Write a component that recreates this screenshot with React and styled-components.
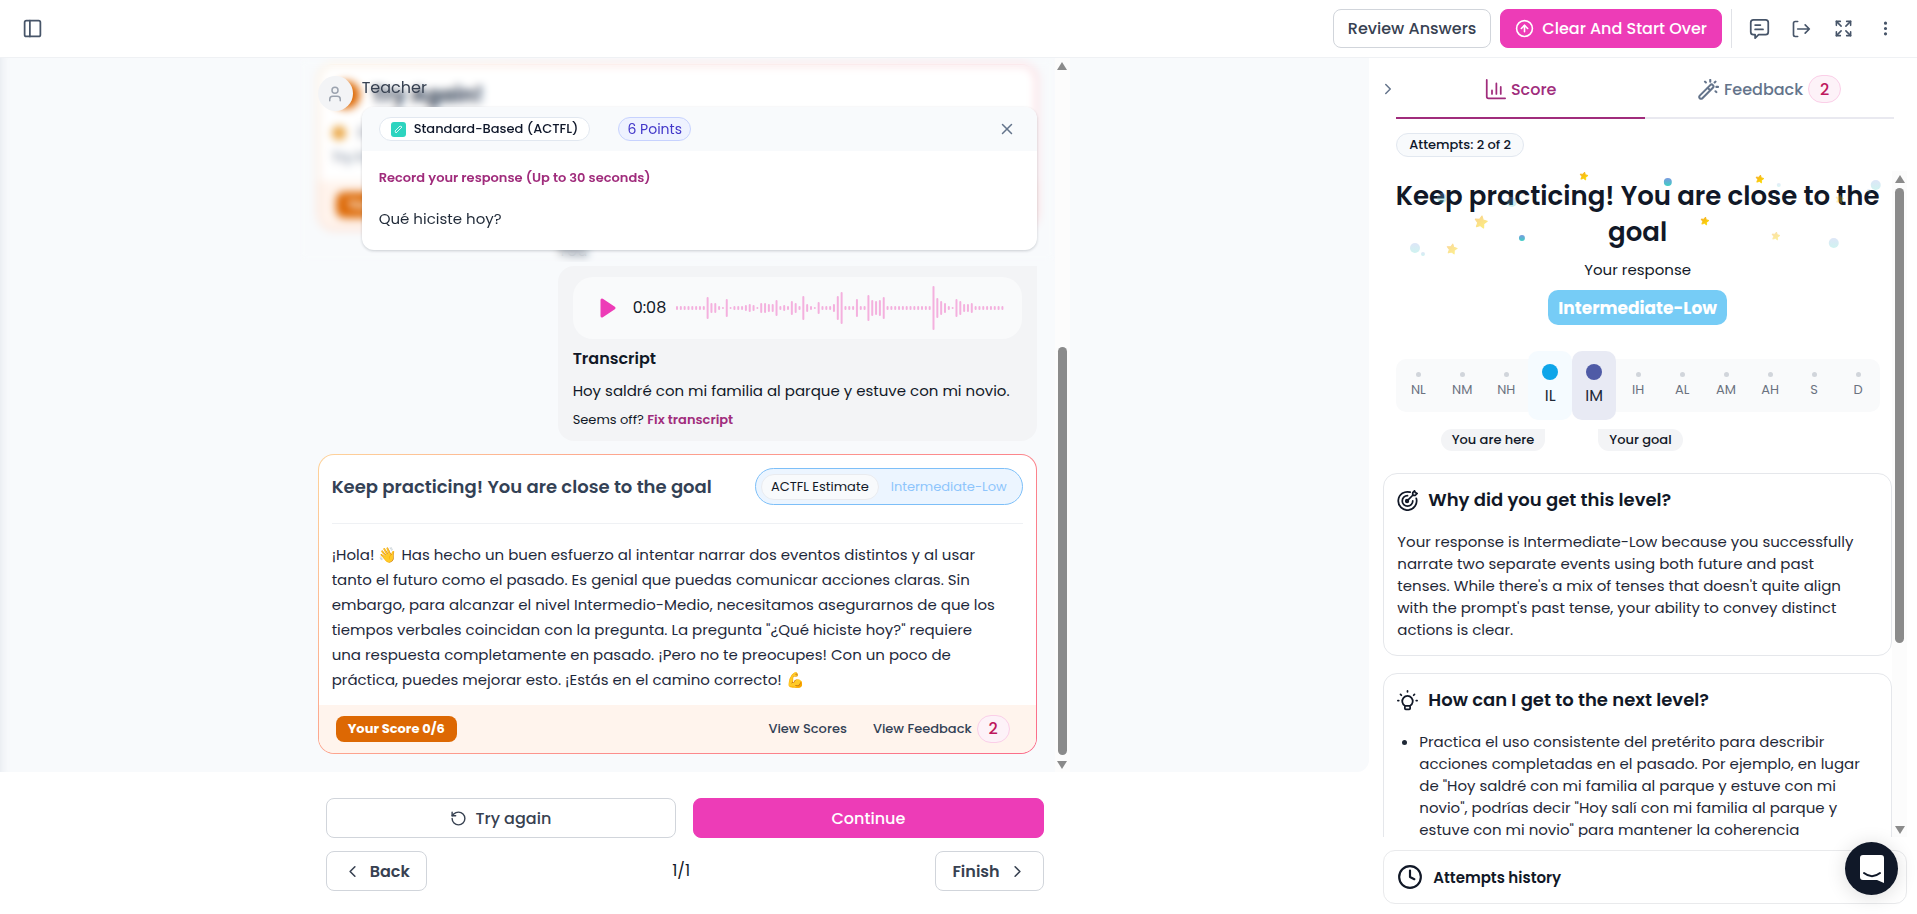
import React from 'react'
import styled, { createGlobalStyle, css } from 'styled-components'
import {
    ChevronLeft,
    ChevronRight,
    CircleArrowUp,
    Clock,
    Expand,
    PanelLeft,
    RotateCcw,
    User,
    X,
} from 'lucide-react'
import { BsThreeDotsVertical } from 'react-icons/bs'

const GlobalStyle = createGlobalStyle`
    * {
        box-sizing: border-box;
    }
    body {
        margin: 0;
        background: white;
        color: #111827;
        font-family: 'Poppins', 'Inter', sans-serif;
        font-size: 16px;
        line-height: 24px;
    }
    h1, h2, h3, p, ul {
        margin: 0;
        padding: 0;
    }
    button {
        font-family: inherit;
        cursor: pointer;
    }
    svg {
        flex-shrink: 0;
    }
`

const Page = styled.div`
    display: flex;
    flex-direction: column;
    height: 100vh;
    overflow: hidden;
`

const Header = styled.header`
    display: flex;
    align-items: center;
    justify-content: space-between;
    padding: 9px 20px;
    border-bottom: 1px solid #eff1f4;
`

const HeaderActions = styled.div`
    display: flex;
    align-items: center;
    gap: 9px;
`

const HeaderIcons = styled.div`
    display: flex;
    align-items: center;
    gap: 18px;
    height: 39px;
    padding-left: 15px;
    border-left: 1px solid #e0e2e7;
`

const IconButton = styled.button`
    display: flex;
    align-items: center;
    justify-content: center;
    width: 24px;
    height: 24px;
    padding: 0;
    border: 0;
    background: none;
    color: ${props => props.$color || '#475569'};
`

const Button = styled.button`
    display: flex;
    align-items: center;
    justify-content: center;
    gap: 8px;
    height: ${props => props.$tall ? '40px' : '39px'};
    padding: 0 ${props => props.$tall ? '16px' : '14px'};
    border: 1px solid ${props => props.$primary ? '#ed3cb7' : '#d1d5db'};
    border-radius: 8px;
    background: ${props => props.$primary ? '#ed3cb7' : 'white'};
    color: ${props => props.$primary ? 'white' : '#374151'};
    font-size: 16px;
    font-weight: ${props => props.$bold ? 600 : 500};
    white-space: nowrap;
`

const Main = styled.main`
    flex: 1;
    min-height: 0;
    display: grid;
    grid-template-columns: minmax(0, 5fr) minmax(0, 2fr);
`

/* conversation */

const Conversation = styled.section`
    display: flex;
    flex-direction: column;
    min-height: 0;
`

const FeedArea = styled.div`
    flex: 1;
    min-height: 0;
    display: flex;
    justify-content: center;
    background: #f8fafc;
    border-bottom-right-radius: 12px;
    box-shadow: inset 10px 0 10px -9px rgba(100, 116, 139, 0.14);
`

const FeedScroller = styled.div`
    position: relative;
    display: flex;
    width: 100%;
    max-width: 770px;
`

const Feed = styled.div`
    flex: 1;
    min-width: 0;
    display: flex;
    flex-direction: column;
    justify-content: flex-end;
    padding: 0 18px 18px;
    overflow: hidden;
`

const Track = styled.div`
    display: flex;
    flex-direction: column;
    align-items: center;
    width: 15px;
    padding: 4px 0 3px;
    background: #fcfcfc;
`

const Arrow = styled.span`
    width: 0;
    height: 0;
    margin-top: ${props => props.$down ? '6px' : '0'};
    border: 5px solid transparent;
    border-top-width: ${props => props.$down ? '8px' : '0'};
    border-bottom-width: ${props => props.$down ? '0' : '8px'};
    border-top-color: #8b8b8b;
    border-bottom-color: #8b8b8b;
`

const Rail = styled.div`
    flex: 1;
    display: flex;
    flex-direction: column;
    justify-content: ${props => props.$end ? 'flex-end' : 'flex-start'};
    margin-top: 5px;
`

const Thumb = styled.div`
    width: 9px;
    border-radius: 5px;
    background: #8b8b8b;
`

const ResultCard = styled.article`
    flex-shrink: 0;
    border: 1px solid transparent;
    border-radius: 16px;
    overflow: hidden;
    background:
        linear-gradient(white, white) padding-box,
        linear-gradient(135deg, #fed39a, #fda58e 30%, #fb6d8a) border-box;
`

const ResultBody = styled.div`
    padding: ${props => props.$compact ? '16px 13px 12px' : '13px'};
`

const ResultTop = styled.div`
    display: flex;
    align-items: center;
    justify-content: space-between;
    padding-bottom: 18px;
    border-bottom: 1px solid #eff1f4;
    margin-bottom: 18px;
`

const ResultTitle = styled.h2`
    font-size: 18px;
    font-weight: 600;
    color: #334155;
`

const ResultText = styled.p`
    padding-right: 23px;
    color: #1e293b;
    font-size: 15px;
    line-height: 25px;
`

const ResultFooter = styled.div`
    display: flex;
    align-items: center;
    gap: 26px;
    height: 48px;
    padding: 0 26px 0 17px;
    background: #fff4ed;
`

const ScoreTag = styled.span`
    margin-right: auto;
    padding: 1px 12px;
    border-radius: 8px;
    background: #dd6803;
    color: white;
    font-size: 13px;
    font-weight: 700;
`

const FooterLink = styled.a`
    display: flex;
    align-items: center;
    gap: 5px;
    color: #334155;
    font-size: 13px;
    font-weight: 500;
    text-decoration: none;
`

const Count = styled.span`
    display: flex;
    align-items: center;
    justify-content: center;
    width: 33px;
    height: 28px;
    border: 1px solid #fbcfe8;
    border-radius: 14px;
    background: #fdf2f8;
    color: #be185d;
    font-size: 16px;
    font-weight: 500;
`

const Estimate = styled.div`
    display: flex;
    align-items: center;
    gap: 12px;
    height: 37px;
    padding: 0 15px 0 5px;
    border: 1px solid #7dbff8;
    border-radius: 19px;
    background: #ecf5ff;
    color: #8ec5fc;
    font-size: 13px;
`

const EstimateLabel = styled.span`
    padding: 0 9px;
    border: 1px solid #e9ebef;
    border-radius: 13px;
    background: #f8fafc;
    color: #111827;
`

const TryTitle = styled.div`
    display: flex;
    align-items: center;
    gap: 12px;
    margin-bottom: 12px;
    font-size: 21px;
    font-weight: 700;
    color: #334155;
`

const Dot = styled.span`
    width: ${props => props.$size};
    height: ${props => props.$size};
    border-radius: 50%;
    background: ${props => props.$color};
`

const TryRow = styled.div`
    display: flex;
    align-items: center;
    gap: 12px;
    font-size: 14px;
    color: #64748b;
`

const You = styled.p`
    width: 479px;
    margin: 9px 0 3px auto;
    color: #334155;
`

const Bubble = styled.article`
    align-self: flex-end;
    flex-shrink: 0;
    width: 479px;
    margin-bottom: 13px;
    padding: 11px 15px 9px;
    border-radius: 16px 0 16px 16px;
    background: #f3f4f6;
    color: #111827;
`

const Player = styled.div`
    display: flex;
    align-items: center;
    height: 62px;
    margin-bottom: 8px;
    padding: 0 16px 0 23px;
    border-radius: 20px;
    background: #f9fafb;
`

const PlayTime = styled.span`
    width: 42px;
    margin-left: 13px;
`

const Wave = styled.svg`
    flex: 1;
    min-width: 0;
    height: 44px;
`

const Transcript = styled.h3`
    margin-bottom: 8px;
    font-size: 16px;
    font-weight: 600;
`

const TranscriptText = styled.p`
    font-size: 15px;
`

const SmallLine = styled.p`
    margin-top: 5px;
    font-size: 13px;
`

const AccentLink = styled.a`
    color: #a02c7c;
    font-weight: 600;
    text-decoration: none;
`

const StickyPrompt = styled.div`
    position: absolute;
    top: 0;
    left: 0;
    right: 15px;
    display: flex;
    gap: 9px;
    padding: 18px 18px 12px;
    backdrop-filter: blur(4px);
`

const Avatar = styled.div`
    display: flex;
    align-items: center;
    justify-content: center;
    width: 35px;
    height: 35px;
    border-radius: 50%;
    background: #f3f4f6;
    color: #9ca3af;
`

const PromptColumn = styled.div`
    flex: 1;
    min-width: 0;
`

const PromptAuthor = styled.p`
    padding-bottom: 7px;
    color: #374151;
`

const PromptCard = styled.article`
    border-radius: 12px;
    overflow: hidden;
    background: white;
    box-shadow: 0 1px 3px rgba(15, 23, 42, 0.2);
`

const PromptHead = styled.div`
    display: flex;
    align-items: center;
    gap: 28px;
    height: 44px;
    padding: 0 18px 0 17px;
    background: #f8fafc;
`

const Chip = styled.span`
    display: flex;
    align-items: center;
    gap: 8px;
    height: 24px;
    padding: 0 11px;
    border: 1px solid #e2e8f0;
    border-radius: 12px;
    background: white;
    color: #0f172a;
    font-size: 13px;
    font-weight: 500;
    white-space: nowrap;
    ${props => props.$indigo && css`
        padding: 0 8px;
        border-color: #c7d2fe;
        background: #eef2ff;
        color: #4338ca;
        font-size: 14px;
        font-weight: 400;
    `}
    ${props => props.$soft && css`
        padding: 0 12px;
        background: #f8fafc;
    `}
`

const PromptBody = styled.div`
    padding: 15px 17px 19px;
`

const PromptHint = styled.p`
    margin-bottom: 17px;
    color: #a02c7c;
    font-size: 13px;
    font-weight: 600;
`

const PromptText = styled.p`
    color: #1f2937;
    font-size: 15px;
`

const Push = styled.div`
    margin-left: auto;
    display: flex;
`

const Controls = styled.footer`
    display: flex;
    flex-direction: column;
    gap: 13px;
    width: 100%;
    max-width: 718px;
    margin: 0 auto;
    padding: 26px 0 23px;
`

const MainActions = styled.div`
    display: grid;
    grid-template-columns: 1fr 1fr;
    gap: 17px;
`

const Pager = styled.div`
    display: flex;
    align-items: center;
    justify-content: space-between;
`

/* score panel */

const Panel = styled.aside`
    display: flex;
    flex-direction: column;
    min-height: 0;
    padding: 0 10px 10px 14px;
`

const TabRow = styled.div`
    display: flex;
    align-items: center;
    padding-right: 13px;
`

const Collapse = styled.button`
    display: flex;
    justify-content: center;
    width: 13px;
    padding: 0 4px 0 0;
    border: 0;
    background: none;
    color: #64748b;
`

const Tab = styled.button`
    flex: 1;
    display: flex;
    align-items: center;
    justify-content: center;
    gap: 5px;
    height: 61px;
    padding: 3px 0 0;
    border: 0;
    border-bottom: 2px solid ${props => props.$active ? '#a02c7c' : '#e9e9f0'};
    background: none;
    color: ${props => props.$active ? '#a02c7c' : '#64748b'};
    font-size: 16px;
    font-weight: 500;
`

const ChipRow = styled.div`
    display: flex;
    padding: 14px 13px;
`

const PanelScroller = styled.div`
    flex: 1;
    min-height: 0;
    display: flex;
    margin-bottom: 13px;
`

const PanelContent = styled.div`
    flex: 1;
    min-width: 0;
    overflow: hidden;
`

const Hero = styled.div`
    position: relative;
    display: flex;
    flex-direction: column;
    align-items: center;
    padding-top: 7px;
`

const Confetti = styled.svg`
    position: absolute;
    top: 0;
    left: 0;
    width: 100%;
    height: 90px;
`

const HeroTitle = styled.h1`
    font-size: 26px;
    font-weight: 600;
    line-height: 36px;
    text-align: center;
`

const HeroText = styled.p`
    margin: 8px 0;
    font-size: 15px;
`

const LevelBadge = styled.strong`
    display: flex;
    align-items: center;
    height: 35px;
    padding: 0 10px;
    border-radius: 10px;
    background: #76ccf6;
    color: white;
    font-size: 17px;
    font-weight: 700;
`

const Levels = styled.div`
    display: grid;
    grid-template-columns: repeat(11, 1fr);
    height: 53px;
    margin: 34px 12px 17px 13px;
    border-radius: 10px;
    background: #f9fafb;
`

const Level = styled.div`
    display: flex;
    flex-direction: column;
    align-items: center;
    justify-content: center;
    gap: 1px;
    padding-top: 3px;
    color: #6b7280;
    font-size: 13px;
    ${props => props.$tint && css`
        gap: 4px;
        margin: -8px 0;
        padding: 0;
        border-radius: 10px;
        background: ${props.$tint};
        color: #1f2937;
        font-size: 16px;
    `}
`

const Markers = styled.div`
    display: grid;
    grid-template-columns: 162px 1fr;
    gap: 53px;
    margin-bottom: 22px;
`

const Marker = styled.span`
    justify-self: ${props => props.$right ? 'end' : 'start'};
    padding: 0 11px;
    border-radius: ${props => props.$right ? '11px 0 11px 11px' : '0 11px 11px 11px'};
    background: #f3f4f6;
    font-size: 13px;
    font-weight: 500;
    line-height: 22px;
`

const Box = styled.section`
    margin-bottom: 17px;
    padding: 14px 26px 14px 13px;
    border: 1px solid #e5e7eb;
    border-radius: 14px;
    color: #1f2937;
    font-size: 15px;
    line-height: 22px;
`

const BoxTitle = styled.h2`
    display: flex;
    align-items: center;
    gap: 10px;
    margin-bottom: 19px;
    color: #111827;
    font-size: 18px;
    font-weight: 600;
    line-height: 24px;
`

const Tips = styled.ul`
    padding-left: 22px;
`

const History = styled.button`
    display: flex;
    align-items: center;
    gap: 10px;
    height: 54px;
    padding: 0 13px;
    border: 1px solid #e9eaec;
    border-radius: 12px;
    background: white;
    color: #111827;
    font-size: 15px;
    font-weight: 600;
`

const ChatLauncher = styled.button`
    position: fixed;
    right: 19px;
    bottom: 19px;
    display: flex;
    align-items: center;
    justify-content: center;
    width: 53px;
    height: 53px;
    padding: 0;
    border: 0;
    border-radius: 50%;
    background: #101828;
    box-shadow: 0 2px 20px rgba(0, 0, 0, 0.14);
`

const bars = [
    4, 4, 4, 4, 4, 4, 4, 4, 22, 10, 10, 4, 2, 18, 2, 4, 4, 4, 6, 8, 6, 2, 10, 10, 8, 8, 16, 4, 6, 4,
    14, 10, 4, 24, 8, 4, 2, 12, 4, 4, 4, 8, 24, 32, 4, 4, 4, 18, 4, 4, 26, 16, 14, 16, 22, 4, 4, 4,
    4, 4, 4, 4, 4, 4, 4, 4, 4, 44, 20, 14, 10, 4, 2, 18, 14, 8, 8, 10, 4, 4, 4, 4, 4, 4, 4, 4,
]

const levels = [
    { name: 'NL' },
    { name: 'NM' },
    { name: 'NH' },
    { name: 'IL', dot: '#0ea5e9', tint: '#f5fbff' },
    { name: 'IM', dot: '#4f5ba6', tint: '#e8eaf4' },
    { name: 'IH' },
    { name: 'AL' },
    { name: 'AM' },
    { name: 'AH' },
    { name: 'S' },
    { name: 'D' },
]

// x, y, scale, opacity
const stars = [
    [201, 5, 4, 1], [377, 8, 4, 1], [322, 50, 4, 1], [98, 51, 6, 0.5],
    [69, 78, 5, 0.45], [393, 65, 4, 0.4], [457, 28, 4, 0.3],
]

// x, y, radius, opacity
const bubbles = [
    [285, 11, 4, 1], [139, 67, 3, 1], [32, 77, 5, 0.25], [40, 83, 2, 0.25], [451, 72, 5, 0.25],
    [493, 14, 5, 0.25], [59, 27, 5, 0.3], [129, 31, 5, 0.25], [396, 14, 2, 0.2], [486, 20, 2, 0.2],
]

function Waveform() {
    return (
        <Wave viewBox="0 0 332 44" preserveAspectRatio="none" aria-hidden="true">
            {bars.map((height, i) => (
                <rect
                    key={i}
                    x={1 + i * 3.84}
                    y={22 - height / 2}
                    width="2"
                    height={height}
                    rx="1"
                    fill="#f4b0de"
                />
            ))}
        </Wave>
    )
}

function HeroConfetti() {
    return (
        <Confetti viewBox="0 0 509 90" aria-hidden="true">
            <defs>
                <linearGradient id="bubble" x1="0" y1="0" x2="0" y2="1">
                    <stop offset="0" stopColor="#7b9ae0" />
                    <stop offset="1" stopColor="#3fcfc4" />
                </linearGradient>
                <linearGradient id="star" x1="0" y1="0" x2="1" y2="1">
                    <stop offset="0" stopColor="#f5a623" />
                    <stop offset="1" stopColor="#fce000" />
                </linearGradient>
            </defs>
            {stars.map(([x, y, size, opacity]) => (
                <path
                    key={`${x}-${y}`}
                    transform={`translate(${x} ${y}) rotate(10) scale(${size / 10})`}
                    d="M0 -10 L3 -4 L10 -3 L5 2 L6 9 L0 6 L-6 9 L-5 2 L-10 -3 L-3 -4 Z"
                    fill="url(#star)"
                    stroke="url(#star)"
                    strokeWidth="2"
                    strokeLinejoin="round"
                    opacity={opacity}
                />
            ))}
            {bubbles.map(([x, y, r, opacity]) => (
                <circle key={`${x}-${y}`} cx={x} cy={y} r={r} fill="url(#bubble)" opacity={opacity} />
            ))}
        </Confetti>
    )
}

function Line({ size = 20, width = 2, children }) {
    return (
        <svg
            width={size}
            height={size}
            viewBox="0 0 24 24"
            fill="none"
            stroke="currentColor"
            strokeWidth={width}
            strokeLinecap="round"
            strokeLinejoin="round"
            aria-hidden="true"
        >
            {children}
        </svg>
    )
}

function CommentIcon() {
    return (
        <Line size={21}>
            <path d="M5 2h14a3 3 0 0 1 3 3v11a3 3 0 0 1-3 3h-8l-4 4v-4H5a3 3 0 0 1-3-3V5a3 3 0 0 1 3-3ZM7 8h6M7 13h9" />
        </Line>
    )
}

function ExitIcon() {
    return (
        <Line size={20}>
            <path d="M8 3H5a2 2 0 0 0-2 2v14a2 2 0 0 0 2 2h3M8 12h14M17 7l5 5-5 5" />
        </Line>
    )
}

function ChartIcon() {
    return (
        <Line size={21}>
            <path d="M2 1v19a2 2 0 0 0 2 2h19M8 17v-4M13 17V5M18 17V9" />
        </Line>
    )
}

function WandIcon() {
    return (
        <Line size={21} width={2.4}>
            <path d="M2 19 14 7a2 2 0 0 1 3 3L5 22a2 2 0 0 1-3-3ZM11 10l3 3M14 1v2M8 3l1 1M20 3l-1 1M21 9h2M20 14l1 1" />
        </Line>
    )
}

function TargetIcon() {
    return (
        <Line size={21}>
            <path d="M15 2.500a10.500 10.500 0 1 0 7 7" />
            <path d="M12 6.500a6 6 0 1 0 6 6" />
            <path d="m11 13 7-7M18 6V3l2-2 1 2 2 1-2 2h-3Z" />
            <circle cx="11.500" cy="12.500" r="1.500" />
        </Line>
    )
}

function BulbIcon() {
    return (
        <Line size={21}>
            <path d="M9 18a6 6 0 1 1 6 0v3a1 1 0 0 1-1 1h-4a1 1 0 0 1-1-1ZM9 18h6M12 2V1M4 5l1 1M20 5l-1 1M1 12h1M22 12h1" />
        </Line>
    )
}

function Scrollbar({ end, size }) {
    return (
        <Track aria-hidden="true">
            <Arrow />
            <Rail $end={end}>
                <Thumb style={{ height: `${size}%` }} />
            </Rail>
            <Arrow $down />
        </Track>
    )
}

function TopBar() {
    return (
        <Header>
            <IconButton aria-label="Toggle sidebar">
                <PanelLeft size={21} />
            </IconButton>
            <HeaderActions>
                <Button>Review Answers</Button>
                <Button $primary>
                    <CircleArrowUp size={19} />
                    Clear And Start Over
                </Button>
                <HeaderIcons>
                    <IconButton aria-label="Comments"><CommentIcon /></IconButton>
                    <IconButton aria-label="Exit"><ExitIcon /></IconButton>
                    <IconButton aria-label="Full screen"><Expand size={19} /></IconButton>
                    <IconButton aria-label="More"><BsThreeDotsVertical size={17} /></IconButton>
                </HeaderIcons>
            </HeaderActions>
        </Header>
    )
}

function Prompt() {
    return (
        <StickyPrompt>
            <Avatar><User size={18} /></Avatar>
            <PromptColumn>
                <PromptAuthor>Teacher</PromptAuthor>
                <PromptCard>
                    <PromptHead>
                        <Chip>
                            <svg width="15" height="15" viewBox="0 0 15 15" aria-hidden="true">
                                <rect width="15" height="15" rx="3" fill="#2dd4bf" />
                                <path
                                    d="m4 9 5-5 2 1-6 6-1-2Z"
                                    fill="none"
                                    stroke="white"
                                    strokeWidth="0.800"
                                />
                            </svg>
                            Standard-Based (ACTFL)
                        </Chip>
                        <Chip $indigo>6 Points</Chip>
                        <Push>
                            <IconButton $color="#64748b" aria-label="Close"><X size={18} /></IconButton>
                        </Push>
                    </PromptHead>
                    <PromptBody>
                        <PromptHint>Record your response (Up to 30 seconds)</PromptHint>
                        <PromptText>Qué hiciste hoy?</PromptText>
                    </PromptBody>
                </PromptCard>
            </PromptColumn>
        </StickyPrompt>
    )
}

function Response() {
    return (
        <Bubble>
            <Player>
                <IconButton $color="#ed3cb7" aria-label="Play">
                    <svg width="16" height="20" viewBox="0 0 16 20">
                        <path d="M2 2v16l12-8Z" fill="currentColor" stroke="currentColor" strokeWidth="3" strokeLinejoin="round" />
                    </svg>
                </IconButton>
                <PlayTime>0:08</PlayTime>
                <Waveform />
            </Player>
            <Transcript>Transcript</Transcript>
            <TranscriptText>Hoy saldré con mi familia al parque y estuve con mi novio.</TranscriptText>
            <SmallLine>
                Seems off? <AccentLink href="#fix">Fix transcript</AccentLink>
            </SmallLine>
        </Bubble>
    )
}

function PreviousResult() {
    return (
        <ResultCard>
            <ResultBody $compact>
                <TryTitle>
                    <Dot $size="28px" $color="#dd6803" />
                    Try Again!
                </TryTitle>
                <TryRow>
                    <Dot $size="14px" $color="#e9a23b" />
                    0
                </TryRow>
                <TryRow>Try it</TryRow>
            </ResultBody>
            <ResultFooter>
                <ScoreTag>Your Score</ScoreTag>
            </ResultFooter>
        </ResultCard>
    )
}

function Result() {
    return (
        <ResultCard>
            <ResultBody>
                <ResultTop>
                    <ResultTitle>Keep practicing! You are close to the goal</ResultTitle>
                    <Estimate>
                        <EstimateLabel>ACTFL Estimate</EstimateLabel>
                        Intermediate-Low
                    </Estimate>
                </ResultTop>
                <ResultText>
                    ¡Hola! 👋 Has hecho un buen esfuerzo al intentar narrar dos eventos distintos y al usar
                    tanto el futuro como el pasado. Es genial que puedas comunicar acciones claras. Sin
                    embargo, para alcanzar el nivel Intermedio-Medio, necesitamos asegurarnos de que los
                    tiempos verbales coincidan con la pregunta. La pregunta "¿Qué hiciste hoy?" requiere
                    una respuesta completamente en pasado. ¡Pero no te preocupes! Con un poco de
                    práctica, puedes mejorar esto. ¡Estás en el camino correcto! 💪
                </ResultText>
            </ResultBody>
            <ResultFooter>
                <ScoreTag>Your Score 0/6</ScoreTag>
                <FooterLink href="#scores">View Scores</FooterLink>
                <FooterLink href="#feedback">
                    View Feedback
                    <Count>2</Count>
                </FooterLink>
            </ResultFooter>
        </ResultCard>
    )
}

function ScorePanel() {
    return (
        <Panel>
            <TabRow>
                <Collapse aria-label="Collapse panel"><ChevronRight size={18} /></Collapse>
                <Tab $active><ChartIcon />Score</Tab>
                <Tab><WandIcon />Feedback<Count>2</Count></Tab>
            </TabRow>
            <ChipRow>
                <Chip $soft>Attempts: 2 of 2</Chip>
            </ChipRow>
            <PanelScroller>
                <PanelContent>
                    <Hero>
                        <HeroTitle>Keep practicing! You are close to the goal</HeroTitle>
                        <HeroConfetti />
                        <HeroText>Your response</HeroText>
                        <LevelBadge>Intermediate-Low</LevelBadge>
                    </Hero>
                    <Levels>
                        {levels.map(level => (
                            <Level key={level.name} $tint={level.tint}>
                                <Dot $size={level.dot ? '16px' : '5px'} $color={level.dot || '#d1d5db'} />
                                {level.name}
                            </Level>
                        ))}
                    </Levels>
                    <Markers>
                        <Marker $right>You are here</Marker>
                        <Marker>Your goal</Marker>
                    </Markers>
                    <Box>
                        <BoxTitle><TargetIcon />Why did you get this level?</BoxTitle>
                        <p>
                            Your response is Intermediate-Low because you successfully narrate two
                            separate events using both future and past tenses. While there's a mix of
                            tenses that doesn't quite align with the prompt's past tense, your ability
                            to convey distinct actions is clear.
                        </p>
                    </Box>
                    <Box>
                        <BoxTitle><BulbIcon />How can I get to the next level?</BoxTitle>
                        <Tips>
                            <li>
                                Practica el uso consistente del pretérito para describir acciones
                                completadas en el pasado. Por ejemplo, en lugar de "Hoy saldré con mi
                                familia al parque y estuve con mi novio", podrías decir "Hoy salí con mi
                                familia al parque y estuve con mi novio" para mantener la coherencia
                            </li>
                        </Tips>
                    </Box>
                </PanelContent>
                <Scrollbar size={72} />
            </PanelScroller>
            <History>
                <Clock size={26} />
                Attempts history
            </History>
        </Panel>
    )
}

export default function App() {
    return (
        <Page>
            <GlobalStyle />
            <TopBar />
            <Main>
                <Conversation>
                    <FeedArea>
                        <FeedScroller>
                            <Feed>
                                <PreviousResult />
                                <You>You</You>
                                <Response />
                                <Result />
                            </Feed>
                            <Prompt />
                            <Scrollbar end size={60} />
                        </FeedScroller>
                    </FeedArea>
                    <Controls>
                        <MainActions>
                            <Button $tall><RotateCcw size={17} />Try again</Button>
                            <Button $tall $primary>Continue</Button>
                        </MainActions>
                        <Pager>
                            <Button $tall $bold><ChevronLeft size={19} />Back</Button>
                            <span>1/1</span>
                            <Button $tall $bold>Finish<ChevronRight size={19} /></Button>
                        </Pager>
                    </Controls>
                </Conversation>
                <ScorePanel />
            </Main>
            <ChatLauncher aria-label="Open chat">
                <svg width="24" height="28" viewBox="0 0 24 28">
                    <path d="M3 0h18a3 3 0 0 1 3 3v25l-7-3H3a3 3 0 0 1-3-3V3a3 3 0 0 1 3-3Z" fill="white" />
                    <path d="M4 18c5 4 11 4 16 0" fill="none" stroke="#101828" strokeWidth="2" strokeLinecap="round" />
                </svg>
            </ChatLauncher>
        </Page>
    )
}
